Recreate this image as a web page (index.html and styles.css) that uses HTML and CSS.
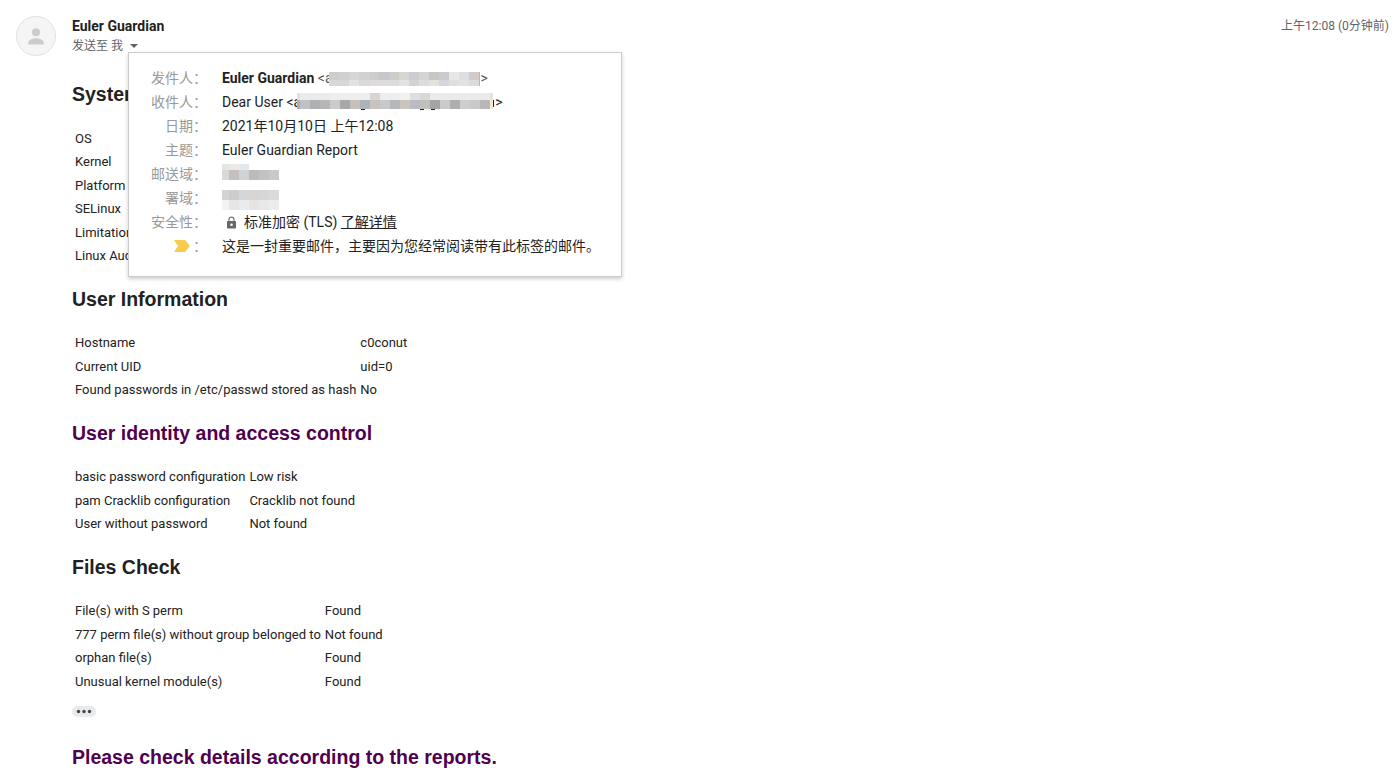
FILE: index.html
```html
<!DOCTYPE html>
<html lang="zh-CN">
<head>
<meta charset="utf-8">
<title>Euler Guardian Report</title>
<link rel="stylesheet" href="styles.css">
</head>
<body>
<article class="message">
  <svg class="avatar" viewBox="0 0 40 40" role="img" aria-label="Euler Guardian">
    <circle cx="20" cy="20" r="19.5" fill="#f5f5f5" stroke="#e0e0e0"/>
    <circle cx="20" cy="16.3" r="4" fill="#ccc"/>
    <path d="M12.3 28.500v-2c0-2.700 5-4.200 7.700-4.200s7.700 1.500 7.700 4.200v2z" fill="#ccc"/>
  </svg>
  <div class="main">
    <header class="header">
      <div class="sender">
        <h3 class="name">Euler Guardian</h3>
        <div class="to">
          <span>发送至 我</span>
          <button class="toggle" type="button" aria-label="显示详细信息" aria-expanded="true"></button>
          <section class="details">
            <table class="detail-table">
              <tr><th scope="row">发件人：</th><td><div class="line"><b>Euler Guardian</b>&nbsp;<span class="addr">&lt;a</span><svg class="mosaic from" viewBox="0 0 152 16" shape-rendering="crispEdges" aria-hidden="true">
                <path fill="#cdcdcd" d="M0 2h10v8H0z"/><path fill="#d0d0d0" d="M10 2h10v8H10z"/><path fill="#d6d6d6" d="M20 2h10v8H20z"/><path fill="#d1d1d1" d="M30 2h10v8H30z"/><path fill="#cfcdcb" d="M40 2h10v8H40z"/><path fill="#c6c7cc" d="M50 2h10v8H50z"/><path fill="#cfcdcb" d="M60 2h10v8H60z"/><path fill="#d6d5d0" d="M70 2h10v8H70z"/><path fill="#cbccd1" d="M80 2h10v8H80z"/><path fill="#d3d4d3" d="M90 2h10v8H90z"/><path fill="#c8c6c4" d="M100 2h10v8h-10z"/><path fill="#cacbcf" d="M110 2h10v8h-10z"/><path fill="#e8e7e5" d="M120 2h10v8h-10z"/><path fill="#dcdee1" d="M130 2h10v8h-10z"/><path fill="#d1cbc9" d="M140 2h10v8h-10z"/>
                <path fill="#d8d7d7" d="M0 10h20v6H0z"/><path fill="#e2e3e7" d="M20 10h10v6H20z"/><path fill="#d9d9d9" d="M30 10h10v6H30z"/><path fill="#dfdbdb" d="M40 10h10v6H40z"/><path fill="#dcdcdc" d="M50 10h20v6H50z"/><path fill="#e2e2e2" d="M70 10h10v6H70z"/><path fill="#d3d2d7" d="M80 10h10v6H80z"/><path fill="#ddd" d="M90 10h10v6H90z"/><path fill="#e4e2df" d="M100 10h10v6h-10z"/><path fill="#d6d6db" d="M110 10h10v6h-10z"/><path fill="#dfdfdf" d="M120 10h10v6h-10z"/><path fill="#e4e1df" d="M130 10h10v6h-10z"/><path fill="#dcdcdc" d="M140 10h10v6h-10z"/>
                <path fill="#a8b8d8" d="M150 2h1v14h-1z"/>
              </svg><span class="addr">&gt;</span></div></td></tr>
              <tr><th scope="row">收件人：</th><td><div class="line">Dear User &lt;a<svg class="mosaic rcpt" viewBox="0 0 198 18" shape-rendering="crispEdges" aria-hidden="true">
                <path fill="#e0e0e0" d="M0 0h3v7H0z"/><path fill="#ebebeb" d="M3 0h30v7H3z"/><path fill="#eee" d="M33 0h40v7H33z"/><path fill="#d9d4d3" d="M73 0h10v7H73z"/><path fill="#eaeff3" d="M83 0h10v7H83z"/><path fill="#eee" d="M93 0h10v7H93z"/><path fill="#f1f1f0" d="M103 0h10v7h-10z"/><path fill="#dedede" d="M113 0h10v7h-10z"/><path fill="#d8d8da" d="M123 0h10v7h-10z"/><path fill="#ebebeb" d="M133 0h60v7h-60z"/><path fill="#e3e3e3" d="M193 0h3v7h-3z"/>
                <path fill="#b3aeab" d="M0 7h3v9H0z"/><path fill="#bdc2c6" d="M3 7h10v9H3z"/><path fill="#afb0b2" d="M13 7h10v9H13z"/><path fill="#b6b6b7" d="M23 7h10v9H23z"/><path fill="#cacbcb" d="M33 7h10v9H33z"/><path fill="#a6a8aa" d="M43 7h10v9H43z"/><path fill="#c6bfba" d="M53 7h10v9H53z"/><path fill="#aeb3b8" d="M63 7h10v9H63z"/><path fill="#cac2c0" d="M73 7h10v9H73z"/><path fill="#c9c9c8" d="M83 7h10v9H83z"/><path fill="#b5b9bc" d="M93 7h10v9H93z"/><path fill="#cac3be" d="M103 7h10v9h-10z"/><path fill="#bbbcc3" d="M113 7h10v9h-10z"/><path fill="#c0c0bc" d="M123 7h10v9h-10z"/><path fill="#a4a4a5" d="M133 7h10v9h-10z"/><path fill="#cbcbc9" d="M143 7h10v9h-10z"/><path fill="#adaeb0" d="M153 7h10v9h-10z"/><path fill="#d0cdcd" d="M163 7h10v9h-10z"/><path fill="#c9cbcb" d="M173 7h10v9h-10z"/><path fill="#b8b8b8" d="M183 7h10v9h-10z"/><path fill="#fbe8d0" d="M193 7h3v9h-3z"/>
                <path fill="#222" d="M196 7h1v7h-1zM64 16h4v1h-4zM123 16h4v1h-4zM134 16h4v1h-4z"/>
              </svg>&gt;</div></td></tr>
              <tr><th scope="row">日期：</th><td>2021年10月10日 上午12:08</td></tr>
              <tr><th scope="row">主题：</th><td>Euler Guardian Report</td></tr>
              <tr><th scope="row">邮送域：</th><td><div class="line"><svg class="mosaic domain" viewBox="0 0 57 20" shape-rendering="crispEdges" aria-hidden="true">
                <path fill="#e5e5e5" d="M0 0h7v6H0z"/><path fill="#ebe9e7" d="M7 0h10v6H7z"/><path fill="#e6e7e8" d="M17 0h10v6H17z"/><path fill="#d9d9da" d="M0 6h7v10H0z"/><path fill="#c5c0bd" d="M7 6h10v10H7z"/><path fill="#cfd3d6" d="M17 6h10v10H17z"/><path fill="#bcbbba" d="M27 6h10v10H27z"/><path fill="#c0c2c5" d="M37 6h10v10H37z"/><path fill="#c9c9cb" d="M47 6h10v10H47z"/>
              </svg></div></td></tr>
              <tr><th scope="row">署域：</th><td><div class="line"><svg class="mosaic signed" viewBox="0 0 57 20" shape-rendering="crispEdges" aria-hidden="true">
                <path fill="#d3d3d3" d="M0 0h7v10H0z"/><path fill="#cecccb" d="M7 0h10v10H7z"/><path fill="#d5d6d8" d="M17 0h10v10H17z"/><path fill="#d7d5d3" d="M27 0h10v10H27z"/><path fill="#d6d6d6" d="M37 0h10v10H37z"/><path fill="#d9dadc" d="M47 0h10v10H47z"/><path fill="#f3f3f3" d="M0 10h7v10H0z"/><path fill="#e6e6e6" d="M7 10h10v10H7z"/><path fill="#e9ebec" d="M17 10h10v10H17z"/><path fill="#e6e3e1" d="M27 10h10v10H27z"/><path fill="#e8e8e8" d="M37 10h10v10H37z"/><path fill="#ececec" d="M47 10h10v10H47z"/>
              </svg></div></td></tr>
              <tr><th scope="row">安全性：</th><td><div class="line"><svg class="lock" viewBox="0 0 18 18" aria-hidden="true"><path d="M7 8.500V6.700a2.500 2.500 0 0 1 5 0v1.800" fill="none" stroke="#777" stroke-width="1.200"/><rect x="5" y="8" width="9" height="7.500" rx="1" fill="#666"/><circle cx="9.500" cy="11.700" r="1.300" fill="#fff"/></svg><span>标准加密 (TLS) <a class="more" href="#tls">了解详情</a></span></div></td></tr>
              <tr><th scope="row"><svg class="important" viewBox="0 0 16 12" aria-hidden="true"><path d="M0 0h11l5 6-5 6H0l4-6z" fill="#f7cb4d"/></svg>：</th><td>这是一封重要邮件，主要因为您经常阅读带有此标签的邮件。</td></tr>
            </table>
          </section>
        </div>
      </div>
      <time class="time">上午12:08 (0分钟前)</time>
    </header>
    <div class="report">
      <h2>System</h2>
      <table>
        <tr><td>OS</td></tr>
        <tr><td>Kernel</td></tr>
        <tr><td>Platform</td></tr>
        <tr><td>SELinux</td></tr>
        <tr><td>Limitation</td></tr>
        <tr><td>Linux Audit</td></tr>
      </table>
      <h2>User Information</h2>
      <table>
        <tr><td>Hostname</td><td>c0conut</td></tr>
        <tr><td>Current UID</td><td>uid=0</td></tr>
        <tr><td>Found passwords in /etc/passwd stored as hash</td><td>No</td></tr>
      </table>
      <h2 class="quoted">User identity and access control</h2>
      <table>
        <tr><td>basic password configuration</td><td>Low risk</td></tr>
        <tr><td>pam Cracklib configuration</td><td>Cracklib not found</td></tr>
        <tr><td>User without password</td><td>Not found</td></tr>
      </table>
      <h2>Files Check</h2>
      <table>
        <tr><td>File(s) with S perm</td><td>Found</td></tr>
        <tr><td>777 perm file(s) without group belonged to</td><td>Not found</td></tr>
        <tr><td>orphan file(s)</td><td>Found</td></tr>
        <tr><td>Unusual kernel module(s)</td><td>Found</td></tr>
      </table>
      <button class="trim" type="button" aria-label="显示修剪的内容"><svg viewBox="0 0 24 11" aria-hidden="true"><g fill="#444"><circle cx="6.500" cy="5.500" r="1.700"/><circle cx="12" cy="5.500" r="1.700"/><circle cx="17.500" cy="5.500" r="1.700"/></g></svg></button>
      <h2 class="quoted">Please check details according to the reports.</h2>
    </div>
  </div>
</article>
</body>
</html>
```

FILE: styles.css
```css
* { box-sizing: border-box; }
body {
  margin: 0;
  background: #fff;
  color: #222;
  font-family: Roboto, "Noto Sans CJK SC", sans-serif;
  font-size: 14px;
}
.message { display: flex; gap: 16px; padding: 16px 10px 0 16px; }
.avatar { flex: none; width: 40px; height: 40px; }
.main { flex: 1; min-width: 0; }
.header { display: flex; justify-content: space-between; }
.name { margin: 0; font-size: 14px; line-height: 20px; font-weight: 700; }
.to {
  position: relative;
  display: flex;
  align-items: center;
  gap: 7px;
  width: max-content;
  margin-top: 1px;
  font-size: 12px;
  line-height: 18px;
  color: #5f6368;
}
.toggle {
  width: 8px;
  height: 4px;
  padding: 0;
  border: 0;
  background: #5f6368;
  clip-path: polygon(0 0, 100% 0, 50% 100%);
}
.time { font-size: 12px; line-height: 20px; color: #5f6368; }
.details {
  position: absolute;
  left: 56px;
  top: 15px;
  z-index: 1;
  padding: 13px 21px 18px 22px;
  background: #fff;
  border: 1px solid #ccc;
  box-shadow: 0 2px 4px rgba(0, 0, 0, 0.2);
}
.detail-table { border-collapse: collapse; font-size: 14px; line-height: 24px; color: #222; white-space: nowrap; }
.detail-table th { padding: 0 15px 0 0; height: 24px; font-weight: 400; text-align: right; color: #999; }
.detail-table td { padding: 0; height: 24px; }
.line { display: flex; align-items: center; height: 24px; }
.addr { color: #555; }
.mosaic { display: block; flex: none; }
.from { width: 152px; height: 16px; margin-left: -4px; z-index: 1; }
.rcpt { width: 198px; height: 18px; margin-left: -4px; z-index: 1; }
.domain { width: 57px; height: 20px; }
.signed { width: 57px; height: 20px; align-self: flex-end; }
.lock { width: 18px; height: 18px; margin-right: 4px; }
.more { color: inherit; }
.important { width: 16px; height: 12px; margin-right: 3px; vertical-align: -1px; }
.report { padding-top: 9px; font-size: 13px; line-height: 1.5; }
.report h2 { font-family: "Liberation Sans", Arial, sans-serif; }
.report h2:last-child { margin-bottom: 0; }
.report .quoted { color: #500050; }
.report table { border-spacing: 2px; }
.report td { padding: 1px; }
.trim {
  display: block;
  width: 24px;
  height: 11px;
  margin: 12px 0 26px;
  padding: 0;
  border: 0;
  border-radius: 6px;
  background: #e8eaed;
}
.trim svg { display: block; width: 24px; height: 11px; }
```
